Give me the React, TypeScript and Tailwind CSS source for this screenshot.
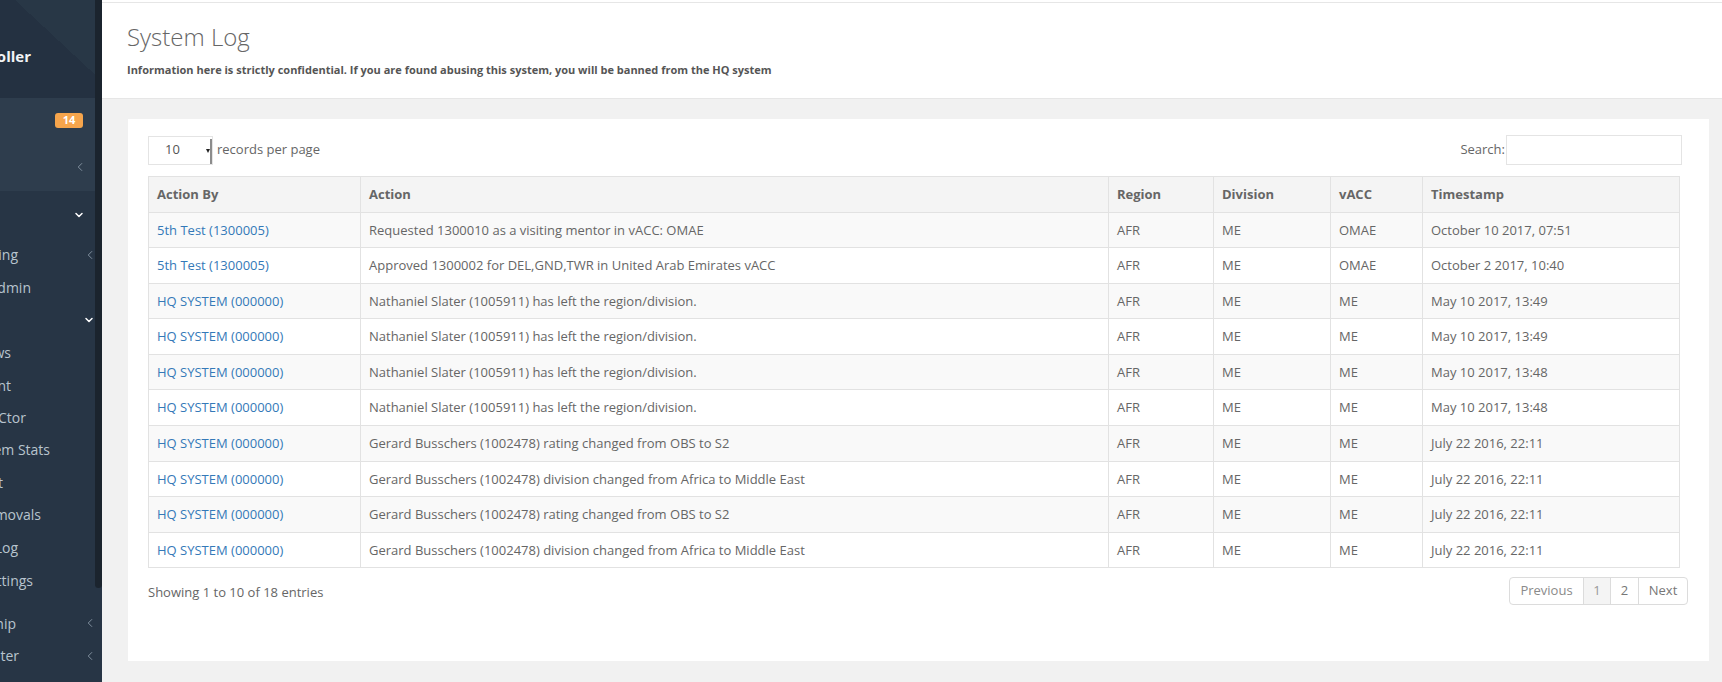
import { ChevronDown, ChevronLeft } from "lucide-react";

type Row = [string, string, string, string, string, string];

const rows: Row[] = [
  ["5th Test (1300005)", "Requested 1300010 as a visiting mentor in vACC: OMAE", "AFR", "ME", "OMAE", "October 10 2017, 07:51"],
  ["5th Test (1300005)", "Approved 1300002 for DEL,GND,TWR in United Arab Emirates vACC", "AFR", "ME", "OMAE", "October 2 2017, 10:40"],
  ["HQ SYSTEM (000000)", "Nathaniel Slater (1005911) has left the region/division.", "AFR", "ME", "ME", "May 10 2017, 13:49"],
  ["HQ SYSTEM (000000)", "Nathaniel Slater (1005911) has left the region/division.", "AFR", "ME", "ME", "May 10 2017, 13:49"],
  ["HQ SYSTEM (000000)", "Nathaniel Slater (1005911) has left the region/division.", "AFR", "ME", "ME", "May 10 2017, 13:48"],
  ["HQ SYSTEM (000000)", "Nathaniel Slater (1005911) has left the region/division.", "AFR", "ME", "ME", "May 10 2017, 13:48"],
  ["HQ SYSTEM (000000)", "Gerard Busschers (1002478) rating changed from OBS to S2", "AFR", "ME", "ME", "July 22 2016, 22:11"],
  ["HQ SYSTEM (000000)", "Gerard Busschers (1002478) division changed from Africa to Middle East", "AFR", "ME", "ME", "July 22 2016, 22:11"],
  ["HQ SYSTEM (000000)", "Gerard Busschers (1002478) rating changed from OBS to S2", "AFR", "ME", "ME", "July 22 2016, 22:11"],
  ["HQ SYSTEM (000000)", "Gerard Busschers (1002478) division changed from Africa to Middle East", "AFR", "ME", "ME", "July 22 2016, 22:11"],
];

type NavItem = {
  label: string;
  end: string;
  h: string;
  icon?: "left" | "down";
  iconPad?: string;
};

// text is clipped on the left by the sidebar, so only the tail shows
const navItems: NavItem[] = [
  { label: "", end: "w-[0px]", h: "h-[47px]", icon: "down", iconPad: "pr-[17px]" },
  { label: "Training", end: "w-[18px]", h: "h-[33px]", icon: "left", iconPad: "pr-[5px]" },
  { label: "HQ Admin", end: "w-[31px]", h: "h-[32px]" },
  { label: "", end: "w-[0px]", h: "h-[33px]", icon: "down", iconPad: "pr-[7px]" },
  { label: "Reviews", end: "w-[11px]", h: "h-[33px]" },
  { label: "Management", end: "w-[11px]", h: "h-[32px]" },
  { label: "vACCtor", end: "w-[26px]", h: "h-[32px]" },
  { label: "System Stats", end: "w-[50px]", h: "h-[33px]" },
  { label: "Audit", end: "w-[3px]", h: "h-[32px]" },
  { label: "Removals", end: "w-[41px]", h: "h-[33px]" },
  { label: "System Log", end: "w-[18px]", h: "h-[33px]" },
  { label: "Settings", end: "w-[33px]", h: "h-[32px]" },
  { label: "", end: "w-[0px]", h: "h-[10px]" },
  { label: "Membership", end: "w-[16px]", h: "h-[34px]", icon: "left", iconPad: "pr-[5px]" },
  { label: "Data Center", end: "w-[19px]", h: "h-[31px]", icon: "left", iconPad: "pr-[5px]" },
];

const Sidebar = () => (
  <aside className="relative w-[102px] shrink-0 overflow-hidden bg-[#273545] text-[14px] text-[#b8c4ce]">
    <div className="flex h-[98px] items-center bg-[linear-gradient(43deg,#243141_0%,#243141_58%,#283746_58%,#283746_100%)] pt-[14px]">
      <div className="flex w-[31px] shrink-0 justify-end whitespace-nowrap text-[15px] font-bold text-[#f2f4f6]">
        Controller
      </div>
    </div>
    <div className="flex h-[93px] flex-col bg-[#2e3d4d]">
      <div className="flex justify-end pr-[19px] pt-[15px]">
        <span className="flex h-[15px] w-[28px] items-center justify-center rounded-[3px] bg-[#f6a54c] text-[11px] font-bold text-white">
          14
        </span>
      </div>
      <div className="mt-[32px] flex justify-end pr-[15px] text-[#8696a4]">
        <ChevronLeft size={14} strokeWidth={1.6} />
      </div>
    </div>
    {navItems.map((item, i) => (
      <div key={i} className={`flex items-center ${item.h} ${item.iconPad ?? ""}`}>
        <div className={`flex shrink-0 justify-end whitespace-nowrap ${item.end}`}>{item.label}</div>
        {item.icon === "left" && (
          <span className="ml-auto text-[#8696a4]">
            <ChevronLeft size={14} strokeWidth={1.6} />
          </span>
        )}
        {item.icon === "down" && (
          <span className="ml-auto text-white">
            <ChevronDown size={12} strokeWidth={3} />
          </span>
        )}
      </div>
    ))}
    <div className="absolute right-0 top-0 h-[588px] w-[7px] rounded-b-[4px] bg-[#1b242e]" />
  </aside>
);

const widths = ["w-[212px]", "w-[748px]", "w-[105px]", "w-[117px]", "w-[92px]", "w-[257px]"];
const headers = ["Action By", "Action", "Region", "Division", "vACC", "Timestamp"];

export default function App() {
  return (
    <div className="flex h-[682px] w-[1722px] overflow-hidden bg-[#f1f1f1] font-['Open_Sans',sans-serif] text-[13px] text-[#666]">
      <Sidebar />
      <main className="flex min-w-0 flex-1 flex-col">
        <div className="h-[2px] bg-white" />
        <header className="flex h-[97px] flex-col border-t border-b border-[#e6e6e6] bg-white px-[25px]">
          <h1 className="mt-[21px] text-[24px] font-light leading-[1.1] text-[#666]">System Log</h1>
          <p className="mt-[12px] text-[11px] font-bold leading-[15px] text-[#555]">
            Information here is strictly confidential. If you are found abusing this system, you will be banned from the HQ system
          </p>
        </header>
        <section className="ml-[26px] mr-[13px] mt-[20px] flex h-[542px] flex-col bg-white pl-[20px] pr-[21px] pt-[16px]">
          <div className="flex items-center justify-between">
            <div className="flex items-center">
              <div className="flex h-[29px] w-[65px] items-center border border-[#e4e4e4] bg-white">
                <span className="pl-[16px] text-[13px] text-[#555]">10</span>
                <div className="ml-auto flex h-[25px] w-[6px] items-center self-end border-r-2 border-[#8c8c8c]">
                  <span className="h-0 w-0 border-x-[2.5px] border-t-[4px] border-x-transparent border-t-[#222]" />
                </div>
              </div>
              <span className="ml-[4px] text-[#666]">records per page</span>
            </div>
            <div className="mr-[6px] flex items-center">
              <span className="text-[#666]">Search:</span>
              <div className="ml-[1px] h-[30px] w-[176px] border border-[#e4e4e4] bg-white" />
            </div>
          </div>
          <table className="mt-[11px] w-[1531px] table-fixed border-collapse leading-[18.57px]">
            <thead>
              <tr className="bg-[#f4f4f4]">
                {headers.map((h, i) => (
                  <th key={h} className={`${widths[i]} border border-[#e2e2e2] px-[8px] py-[8px] text-left font-bold text-[#666]`}>
                    {h}
                  </th>
                ))}
              </tr>
            </thead>
            <tbody>
              {rows.map((r, ri) => (
                <tr key={ri} className={ri % 2 === 0 ? "bg-[#f9f9f9]" : "bg-white"}>
                  {r.map((c, ci) => (
                    <td key={ci} className="whitespace-nowrap border border-[#e2e2e2] px-[8px] py-[8px]">
                      {ci === 0 ? <span className="text-[#3479b8]">{c}</span> : c}
                    </td>
                  ))}
                </tr>
              ))}
            </tbody>
          </table>
          <div className="mt-[9px] flex items-start justify-between">
            <div className="pt-[6px]">Showing 1 to 10 of 18 entries</div>
            <div className="flex h-[28px] overflow-hidden rounded-[4px] border border-[#dcdcdc] text-[#777]">
              <span className="flex w-[73px] items-center justify-center text-[#8a8a8a]">Previous</span>
              <span className="flex w-[27px] items-center justify-center border-l border-[#dcdcdc] bg-[#f4f4f4] text-[#999]">1</span>
              <span className="flex w-[28px] items-center justify-center border-l border-[#dcdcdc]">2</span>
              <span className="flex w-[49px] items-center justify-center border-l border-[#dcdcdc]">Next</span>
            </div>
          </div>
        </section>
      </main>
    </div>
  );
}
